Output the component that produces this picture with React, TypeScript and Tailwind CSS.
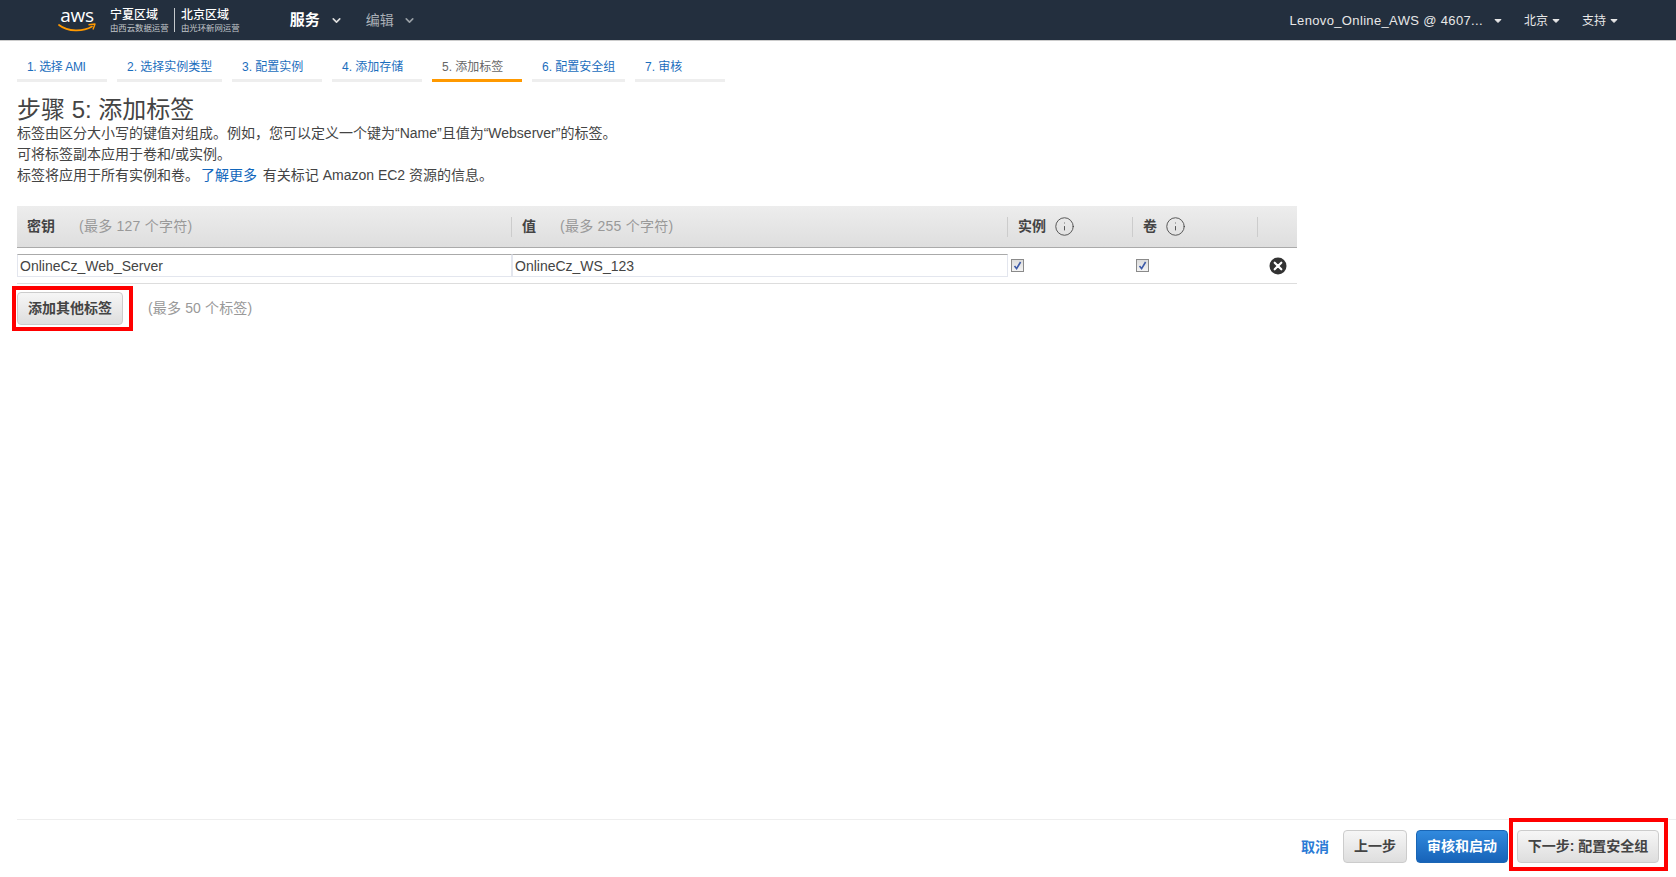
import { ChevronDown, Info } from 'lucide-react';

const FONT = 'font-["Liberation_Sans","Noto_Sans_CJK_SC",sans-serif]';

const STEPS = [
  { label: '1. 选择 AMI', width: 'w-[90px] tracking-[-0.4px]' },
  { label: '2. 选择实例类型', width: 'w-[105px]' },
  { label: '3. 配置实例', width: 'w-[90px]' },
  { label: '4. 添加存储', width: 'w-[90px]' },
  { label: '5. 添加标签', width: 'w-[90px]', active: true },
  { label: '6. 配置安全组', width: 'w-[93px]' },
  { label: '7. 审核', width: 'w-[90px]' },
];

function Caret() {
  return (
    <svg width="8" height="6" viewBox="0 0 8 6" className="shrink-0">
      <path d="M1 1.5 L7 1.5 L4 4.5 Z" fill="#e8e8e8" stroke="#e8e8e8" strokeLinejoin="round" />
    </svg>
  );
}

function Region({ name, sub }: { name: string; sub: string }) {
  return (
    <div className="flex flex-col pt-[1px]">
      <span className="text-[12px] leading-[14px] font-medium text-white">{name}</span>
      <span className="mt-[1px] text-[8.4px] leading-[11px] text-[#c4c8cc]">{sub}</span>
    </div>
  );
}

function TopNav() {
  return (
    <header className="flex h-[41px] shrink-0 items-center border-b border-[#ccc] bg-[#232f3e]">
      <div className="ml-[58px] flex w-[38px] flex-col items-center">
        <span className="font-['Open_Sans',sans-serif] text-[19px] leading-[17px] tracking-[-0.3px] text-white">aws</span>
        <svg width="38" height="10" viewBox="0 0 38 10" className="-mt-[1px]">
          <path d="M1 2 C10 9, 25 9, 34 3.5" fill="none" stroke="#f90" strokeWidth="1.7" strokeLinecap="round" />
          <path d="M30.5 1.8 L37 1 L35 6.5" fill="none" stroke="#f90" strokeWidth="1.4" strokeLinejoin="round" />
        </svg>
      </div>
      <div className="ml-[14px] w-[64px]">
        <Region name="宁夏区域" sub="由西云数据运营" />
      </div>
      <div className="h-[24px] w-px bg-[#c4c8cc]" />
      <div className="ml-[6px]">
        <Region name="北京区域" sub="由光环新网运营" />
      </div>
      <div className="ml-[50px] flex items-center text-[15px] font-bold text-white">
        服务
        <ChevronDown size={13} strokeWidth={3} className="ml-[10px] text-[#ddd]" />
      </div>
      <div className="ml-[23px] flex items-center text-[14px] text-[#aab0b6]">
        编辑
        <ChevronDown size={13} strokeWidth={3} className="ml-[9px] text-[#99a0a6]" />
      </div>
      <div className="mr-[58px] ml-auto flex items-center pt-[2px] text-[13px] text-[#e8e8e8]">
        <span className="tracking-[0.35px]">Lenovo_Online_AWS @ 4607...</span>
        <span className="mr-[22px] ml-[11px]"><Caret /></span>
        <span className="text-[12px]">北京</span>
        <span className="mr-[22px] ml-[4px]"><Caret /></span>
        <span className="text-[12px]">支持</span>
        <span className="ml-[4px]"><Caret /></span>
      </div>
    </header>
  );
}

function Steps() {
  return (
    <nav className="mt-[13px] flex gap-[10px]">
      {STEPS.map((step) => (
        <div
          key={step.label}
          className={`h-[28px] border-b-[3px] pt-[5px] pl-[10px] text-[12px] leading-[16px] ${step.width} ${
            step.active ? 'border-[#f90] text-[#666]' : 'border-[#eee] text-[#1b6ebd]'
          }`}
        >
          {step.label}
        </div>
      ))}
    </nav>
  );
}

function HeaderCell({ width, title, hint, info }: { width: string; title: string; hint?: string; info?: boolean }) {
  return (
    <div className={`flex h-[20px] items-center border-r border-[#ccc] pl-[10px] text-[14px] ${width}`}>
      <span className="font-bold text-[#444]">{title}</span>
      {hint && <span className="ml-[24px] tracking-[0.25px] text-[#999]">{hint}</span>}
      {info && <Info size={21} strokeWidth={1} className="ml-[8px] text-[#444]" />}
    </div>
  );
}

function FakeInput({ width, value }: { width: string; value: string }) {
  return (
    <div
      className={`flex h-[23px] items-center border border-t-[#aaa] border-r-[#e3e6ee] border-b-[#e3e6ee] border-l-[#e3e6ee] pt-[1px] pl-[2px] text-[14px] text-[#444] ${width}`}
    >
      {value}
    </div>
  );
}

function CheckBox() {
  return (
    <div className="flex h-[13px] w-[13px] items-center justify-center border border-[#8a8a8a] bg-gradient-to-b from-[#dcdcdc] to-[#f4f4f4]">
      <svg width="9" height="9" viewBox="0 0 9 9">
        <path d="M1.5 5 L3.6 7.6 L7.6 1" fill="none" stroke="#3d5aa8" strokeWidth="1.6" />
      </svg>
    </div>
  );
}

function RemoveIcon() {
  return (
    <svg width="18" height="18" viewBox="0 0 18 18">
      <circle cx="9" cy="9" r="8.5" fill="#333" />
      <path d="M5.7 5.7 L12.3 12.3 M12.3 5.7 L5.7 12.3" stroke="#fff" strokeWidth="2.2" strokeLinecap="round" />
    </svg>
  );
}

function TagTable() {
  return (
    <section className="mt-[20px] w-[1280px]">
      <div className="flex h-[42px] items-center border-b border-[#aaa] bg-gradient-to-b from-[#ededed] to-[#dedede]">
        <HeaderCell width="w-[495px]" title="密钥" hint="(最多 127 个字符)" />
        <HeaderCell width="w-[496px]" title="值" hint="(最多 255 个字符)" />
        <HeaderCell width="w-[125px]" title="实例" info />
        <HeaderCell width="w-[125px]" title="卷" info />
      </div>
      <div className="flex h-[36px] items-center border-b border-[#ddd]">
        <FakeInput width="w-[495px]" value="OnlineCz_Web_Server" />
        <FakeInput width="w-[496px]" value="OnlineCz_WS_123" />
        <div className="w-[125px] pl-[3px]"><CheckBox /></div>
        <div className="w-[136px] pl-[3px]"><CheckBox /></div>
        <RemoveIcon />
      </div>
    </section>
  );
}

function GrayButton({ children, width }: { children: React.ReactNode; width: string }) {
  return (
    <button className={`flex h-[33px] items-center justify-center rounded-[4px] border border-[#ccc] bg-gradient-to-b from-[#f6f6f6] to-[#dedede] text-[14px] font-bold text-[#444] ${width}`}>
      {children}
    </button>
  );
}

export default function App() {
  return (
    <div className={`flex h-screen flex-col overflow-hidden bg-white ${FONT}`}>
      <TopNav />
      <main className="flex flex-1 flex-col pl-[17px]">
        <Steps />
        <h1 className="mt-[14px] text-[24px] leading-[27px] text-[#444]">步骤 5: 添加标签</h1>
        <div className="text-[14px] leading-[21px] text-[#444]">
          <p>标签由区分大小写的键值对组成。例如，您可以定义一个键为“Name”且值为“Webserver”的标签。</p>
          <p>可将标签副本应用于卷和/或实例。</p>
          <p>
            标签将应用于所有实例和卷。 <a className="-ml-[2px] mr-[2px] text-[#1166bb]">了解更多</a> 有关标记 Amazon EC2 资源的信息。
          </p>
        </div>
        <TagTable />
        <div className="mt-[8px] flex items-center">
          <div className="relative">
            <GrayButton width="w-[106px]">添加其他标签</GrayButton>
            <div className="absolute -top-[6px] -right-[10px] -bottom-[6px] -left-[5px] border-4 border-[#f00]" />
          </div>
          <span className="ml-[25px] tracking-[0.15px] text-[14px] text-[#999]">(最多 50 个标签)</span>
        </div>
        <footer className="mt-auto flex h-[58px] items-start justify-end gap-[9px] border-t border-[#eee] pt-[10px] pr-[17px]">
          <a className="mr-[5px] self-start pt-[7px] text-[14px] font-bold text-[#2b7bd6]">取消</a>
          <GrayButton width="w-[64px]">上一步</GrayButton>
          <button className="flex h-[33px] w-[92px] items-center justify-center rounded-[4px] border border-[#1a66b5] bg-gradient-to-b from-[#318ade] to-[#1763b8] text-[14px] font-bold text-white">
            审核和启动
          </button>
          <div className="relative">
            <GrayButton width="w-[142px]">下一步: 配置安全组</GrayButton>
            <div className="absolute -top-[12px] -right-[9px] -bottom-[8px] -left-[8px] border-4 border-[#f00]" />
          </div>
        </footer>
      </main>
    </div>
  );
}
